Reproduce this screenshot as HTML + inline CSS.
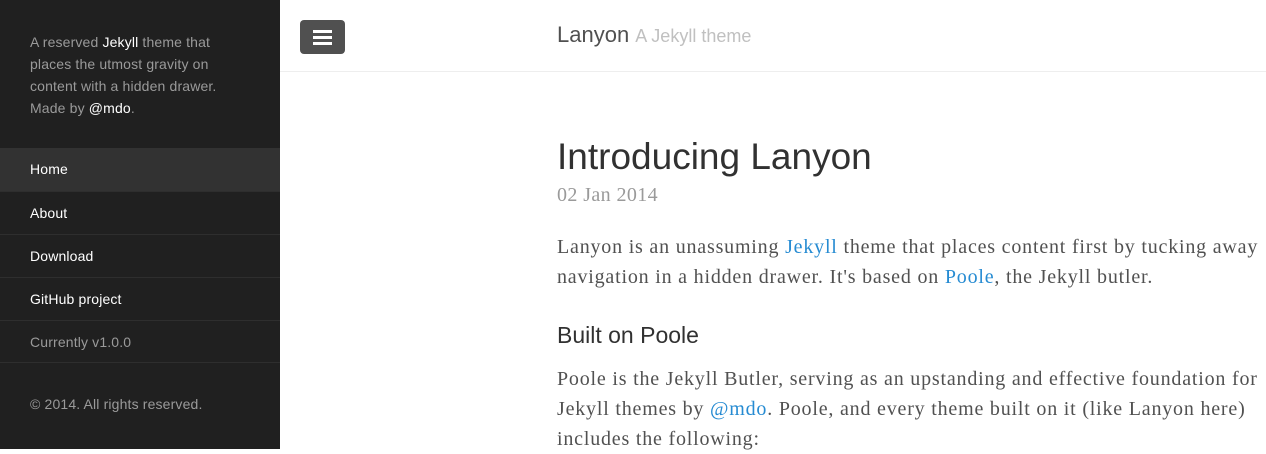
<!DOCTYPE html>
<html><head><meta charset="utf-8"><style>
*{margin:0;padding:0;box-sizing:border-box}
html,body{width:1266px;height:449px;overflow:hidden;background:#fff}
.sb{position:absolute;left:0;top:0;width:280px;height:449px;background:#202020;font-family:"Liberation Sans",sans-serif;font-size:14px;color:#9a9a9a;letter-spacing:0.15px}
.sb p{position:absolute;left:30px;top:31px;width:225px;line-height:22px}
.sb b{color:#fff;font-weight:normal}
.nav{position:absolute;left:0;top:148px;width:280px}
.nav div{height:43px;line-height:43px;padding-left:30px;color:#fff;border-top:1px solid #2e2e2e}
.nav div.a{background:#323232;border-top:none}
.nav div.c{color:#9a9a9a;border-bottom:1px solid #2e2e2e}
.cp{position:absolute;left:30px;top:396px}
.hb{position:absolute;left:300px;top:20px;width:45px;height:34px;background:#505050;border-radius:4px}
.hb i{position:absolute;left:13px;width:19px;height:3px;background:#fff}
.hd{position:absolute;left:280px;top:0;width:986px;height:72px;border-bottom:1px solid #eee}
.t{position:absolute;left:557px;top:22px;font-family:"Liberation Sans",sans-serif;font-size:22px;color:#505050;font-weight:300}
.t span{font-size:18px;color:#c0c0c0}
h1{position:absolute;left:557px;top:136px;font-family:"Liberation Sans",sans-serif;font-weight:normal;font-size:37px;color:#313131}
.d{position:absolute;left:557px;top:184px;font-family:"Liberation Serif",serif;font-size:20px;color:#9a9a9a;letter-spacing:0.4px}
.p{position:absolute;left:557px;width:720px;font-family:"Liberation Serif",serif;font-size:20px;letter-spacing:0.8px;line-height:30px;color:#515151;white-space:nowrap}
.p a{color:#268bd2;text-decoration:none}
h2{position:absolute;left:557px;top:322px;font-family:"Liberation Sans",sans-serif;font-weight:normal;font-size:23px;color:#313131}
</style></head><body>
<div class="sb"><p>A reserved <b>Jekyll</b> theme that places the utmost gravity on content with a hidden drawer. Made by <b>@mdo</b>.</p>
<div class="nav"><div class="a">Home</div><div>About</div><div>Download</div><div>GitHub project</div><div class="c">Currently v1.0.0</div></div>
<div class="cp">© 2014. All rights reserved.</div></div>
<div class="hd"></div>
<div class="hb"><i style="top:10px"></i><i style="top:16px"></i><i style="top:22px"></i></div>
<div class="t">Lanyon <span>A Jekyll theme</span></div>
<h1>Introducing Lanyon</h1>
<div class="d">02 Jan 2014</div>
<div class="p" style="top:232px">Lanyon is an unassuming <a>Jekyll</a> theme that places content first by tucking away<br>navigation in a hidden drawer. It's based on <a>Poole</a>, the Jekyll butler.</div>
<h2>Built on Poole</h2>
<div class="p" style="top:364px">Poole is the Jekyll Butler, serving as an upstanding and effective foundation for<br>Jekyll themes by <a>@mdo</a>. Poole, and every theme built on it (like Lanyon here)<br>includes the following:</div>
</body></html>
